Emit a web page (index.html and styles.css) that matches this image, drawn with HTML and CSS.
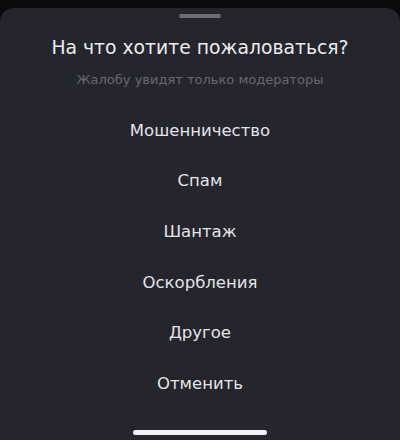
FILE: index.html
```html
<!DOCTYPE html>
<html lang="ru">
<head>
<meta charset="utf-8">
<title>Пожаловаться</title>
<link rel="stylesheet" href="styles.css">
</head>
<body>
  <div class="sheet">
    <div class="grabber"></div>
    <h1 class="title">На что хотите пожаловаться?</h1>
    <p class="subtitle">Жалобу увидят только модераторы</p>
    <ul class="options">
      <li class="option">Мошенничество</li>
      <li class="option">Спам</li>
      <li class="option">Шантаж</li>
      <li class="option">Оскорбления</li>
      <li class="option">Другое</li>
      <li class="option">Отменить</li>
    </ul>
    <div class="home-indicator"></div>
  </div>
</body>
</html>
```
FILE: styles.css
```css
html, body {
  margin: 0;
  padding: 0;
  height: 100%;
}

body {
  background: #0b0b0d;
  font-family: "DejaVu Sans", "Noto Sans", sans-serif;
  overflow: hidden;
}

.sheet {
  margin-top: 8px;
  height: 432px;
  background: #25252d;
  border-radius: 14px 14px 0 0;
  display: flex;
  flex-direction: column;
  align-items: center;
  box-sizing: border-box;
  padding-top: 6px;
}

.grabber {
  width: 42px;
  height: 4px;
  border-radius: 2px;
  background: #6c6c74;
}

.title {
  margin: 17px 0 0;
  font-size: 18.8px;
  font-weight: 400;
  line-height: 26px;
  color: #ececee;
}

.subtitle {
  margin: 10px 0 0;
  font-size: 13px;
  line-height: 18px;
  color: #68686f;
}

.options {
  list-style: none;
  margin: 16px 0 0;
  padding: 0;
  width: 100%;
  display: flex;
  flex-direction: column;
}

.option {
  height: 50.6px;
  display: flex;
  align-items: center;
  justify-content: center;
  font-size: 16.5px;
  color: #e4e4e8;
}

.home-indicator {
  margin-top: auto;
  margin-bottom: 5px;
  width: 134px;
  height: 5px;
  border-radius: 3px;
  background: #f4f4f6;
}
```
